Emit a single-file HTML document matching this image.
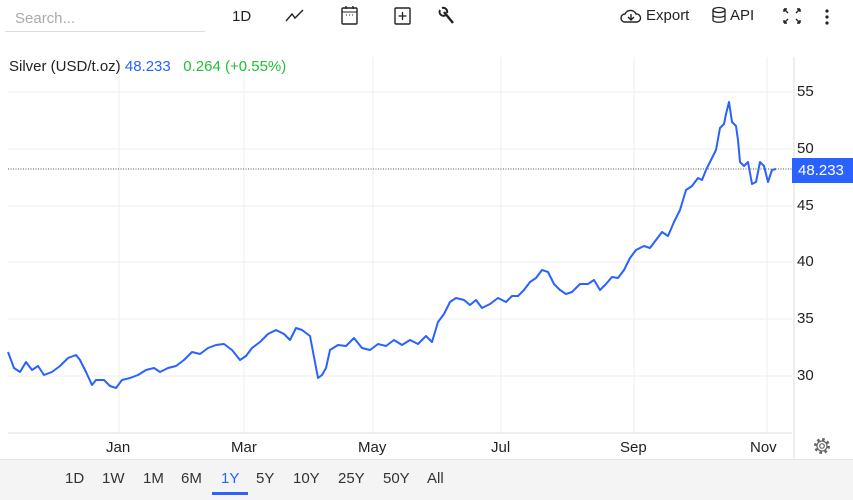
<!DOCTYPE html><html><head><style>
body{margin:0;width:853px;height:499px;background:#fff;font-family:"Liberation Sans",sans-serif;position:relative;overflow:hidden;color:#222}
.a{position:absolute;white-space:nowrap}
</style></head><body>
<div class="a" style="left:5px;top:0;width:200px;height:31px;border-bottom:1px solid #ddd"></div>
<div class="a" style="left:15px;top:10px;font-size:15px;color:#aaa">Search...</div>
<div class="a" style="left:232px;top:8px;font-size:15px">1D</div>
<svg class="a" style="left:284px;top:6px" width="22" height="20"><path d="M2 15 L8 8 L11 12 L19 4" fill="none" stroke="#222" stroke-width="1.4"/></svg>
<svg class="a" style="left:340px;top:4px" width="20" height="22"><rect x="2" y="4" width="15" height="16" rx="1" fill="none" stroke="#222" stroke-width="1.4"/><line x1="2" y1="8" x2="17" y2="8" stroke="#222"/><path d="M6 2v3M13 2v3" stroke="#222" stroke-width="1.4"/><path d="M6 11h1M9 11h1M12 11h1" stroke="#222"/></svg>
<svg class="a" style="left:393px;top:5px" width="20" height="22"><rect x="2" y="3" width="15" height="16" rx="1" fill="none" stroke="#222" stroke-width="1.4"/><path d="M9.5 7v8M5.5 11h8" stroke="#222" stroke-width="1.3"/></svg>
<svg class="a" style="left:438px;top:6px" width="20" height="20"><path d="M6 6 L15 17" stroke="#222" stroke-width="2.4"/><path d="M2 4 a4 4 0 0 0 6 5 M4 2 a4 4 0 0 1 5 5" fill="none" stroke="#222" stroke-width="2"/></svg>
<svg class="a" style="left:620px;top:7px" width="22" height="18"><path d="M5 15 a4 4 0 0 1 0-8 a6 6 0 0 1 11 0 a4 4 0 0 1 1 8z" fill="none" stroke="#222" stroke-width="1.4"/><path d="M11 7v6M8 10l3 3 3-3" fill="none" stroke="#222" stroke-width="1.4"/></svg>
<div class="a" style="left:646px;top:7px;font-size:15px">Export</div>
<svg class="a" style="left:711px;top:6px" width="16" height="18"><ellipse cx="8" cy="4" rx="6" ry="2.5" fill="none" stroke="#222" stroke-width="1.3"/><path d="M2 4v10c0 3 12 3 12 0V4M2 9c0 3 12 3 12 0" fill="none" stroke="#222" stroke-width="1.3"/></svg>
<div class="a" style="left:730px;top:7px;font-size:15px">API</div>
<svg class="a" style="left:782px;top:7px" width="20" height="18"><path d="M2 2l4 4M2 2h3M2 2v3M18 2l-4 4M18 2h-3M18 2v3M2 16l4-4M2 16h3M2 16v-3M18 16l-4-4M18 16h-3M18 16v-3" fill="none" stroke="#222" stroke-width="1.4"/></svg>
<svg class="a" style="left:822px;top:8px" width="10" height="18"><circle cx="5" cy="3" r="1.6" fill="#222"/><circle cx="5" cy="9" r="1.6" fill="#222"/><circle cx="5" cy="15" r="1.6" fill="#222"/></svg>
<svg class="a" style="left:0;top:0" width="853" height="499">
<g stroke="#eee" stroke-width="1">
<path d="M119 57V433M244 57V433M373 57V433M501 57V433M634 57V433M767 57V433"/>
<path d="M8 92H792M8 149H792M8 206H792M8 262H792M8 319H792M8 376H792"/>
</g>
<path d="M8 433H792M794 57V459" stroke="#ddd"/>
<path d="M8 169H792" stroke="#555" stroke-dasharray="1,1.5"/>
<polyline fill="none" stroke="#2962ff" stroke-width="2" stroke-linejoin="round" points="8,352 14,368 20,372 26,362 32,370 38,366 44,375 52,372 60,366 68,358 76,355 80,360 86,372 92,385 96,380 104,380 110,386 116,388 122,380 130,378 138,375 146,370 154,368 160,372 168,368 176,366 184,360 192,352 200,354 208,348 216,345 224,344 232,350 240,360 246,356 252,348 260,342 268,334 276,330 284,334 290,340 296,328 302,330 310,336 318,378 322,375 326,368 330,350 338,345 346,346 354,338 362,348 370,350 378,344 386,346 394,340 402,345 410,340 418,344 426,336 432,342 438,322 444,314 450,302 456,298 464,300 470,305 476,300 482,308 490,304 498,298 506,302 512,296 518,296 524,290 530,282 536,278 542,270 548,272 554,284 560,290 566,294 572,292 580,284 588,284 594,280 600,290 606,284 612,277 618,278 624,270 630,258 636,250 644,246 650,248 656,240 662,232 668,236 674,222 680,210 686,190 692,186 698,178 702,180 706,170 712,158 716,150 720,128 724,124 726,114 729,102 732,122 736,126 738,140 740,162 744,166 748,162 752,184 756,182 760,162 764,166 768,182 772,170 776,169"/>
<rect x="792" y="158" width="61" height="25" fill="#2962ff"/>
</svg>
<div class="a" style="left:798px;top:162px;font-size:15px;color:#fff">48.233</div>
<div class="a" style="left:9px;top:58px;font-size:15px">Silver (USD/t.oz) <span style="color:#2962ff">48.233</span> &nbsp; <span style="color:#22c033">0.264 (+0.55%)</span></div>
<div class="a" style="left:797px;top:83px;font-size:15px">55</div>
<div class="a" style="left:797px;top:140px;font-size:15px">50</div>
<div class="a" style="left:797px;top:197px;font-size:15px">45</div>
<div class="a" style="left:797px;top:253px;font-size:15px">40</div>
<div class="a" style="left:797px;top:310px;font-size:15px">35</div>
<div class="a" style="left:797px;top:367px;font-size:15px">30</div>
<div class="a" style="left:106px;top:439px;font-size:15px">Jan</div>
<div class="a" style="left:231px;top:439px;font-size:15px">Mar</div>
<div class="a" style="left:358px;top:439px;font-size:15px">May</div>
<div class="a" style="left:491px;top:439px;font-size:15px">Jul</div>
<div class="a" style="left:620px;top:439px;font-size:15px">Sep</div>
<div class="a" style="left:750px;top:439px;font-size:15px">Nov</div>
<svg class="a" style="left:811px;top:435px" width="22" height="22"><circle cx="11" cy="11" r="6.5" fill="none" stroke="#666" stroke-width="3" stroke-dasharray="2.5,2.6"/><circle cx="11" cy="11" r="5" fill="none" stroke="#666" stroke-width="1.2"/><circle cx="11" cy="11" r="2.3" fill="none" stroke="#666" stroke-width="1.2"/></svg>
<div class="a" style="left:0;top:459px;width:853px;height:40px;background:#f4f4f4;border-top:1px solid #e4e4e4"></div>
<div class="a" style="left:0;top:470px;font-size:15px;color:#333">
<span class="a" style="left:65px">1D</span><span class="a" style="left:102px">1W</span><span class="a" style="left:143px">1M</span><span class="a" style="left:181px">6M</span><span class="a" style="left:221px;color:#2962ff">1Y</span><span class="a" style="left:256px">5Y</span><span class="a" style="left:293px">10Y</span><span class="a" style="left:338px">25Y</span><span class="a" style="left:383px">50Y</span><span class="a" style="left:427px">All</span></div>
<div class="a" style="left:212px;top:492px;width:36px;height:3px;background:#2962ff"></div>
</body></html>
